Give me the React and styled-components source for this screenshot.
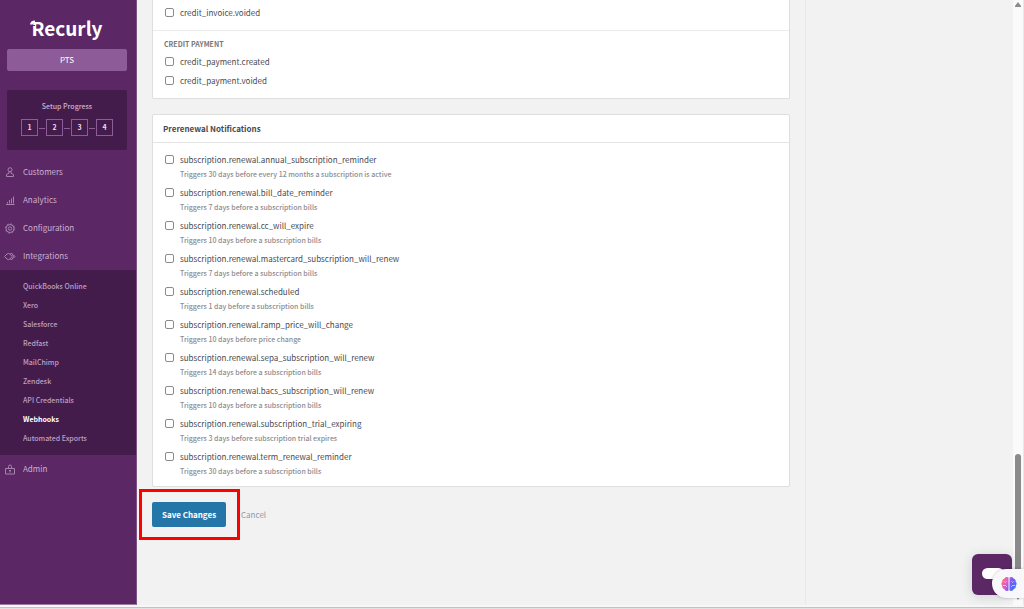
import React from "react";
import styled, { createGlobalStyle } from "styled-components";

const Global = createGlobalStyle`
  * { box-sizing: border-box; }
  body {
    margin: 0;
    background: #f2f2f2;
    color: #4a4a4f;
    font-family: "Noto Sans CJK SC", "Noto Sans", sans-serif;
    font-size: 8px;
    line-height: 12px;
  }
  button, input { font: inherit; }
  a { color: inherit; text-decoration: none; }
  ul { list-style: none; margin: 0; padding: 0; }
`;

const Window = styled.div`
  display: flex;
  flex-direction: column;
  height: 100vh;
  overflow: hidden;
`;

const Page = styled.div`
  flex: 1;
  display: flex;
  min-height: 0;
`;

const WindowEdge = styled.div`
  height: 4px;
  background: #f7f7f7;
  border-bottom: 1px solid #e2e2e2;
  box-shadow: inset 0 -1px #c2c2c2;
`;

const Sidebar = styled.aside`
  width: 137px;
  flex: none;
  background: #5b2765;
  border-right: 1px solid #7d5387;
  border-bottom: 1px solid #9a7aa2;
  color: #cbb0d0;
`;

const SidebarTop = styled.div`
  display: flex;
  flex-direction: column;
  padding: 14px 9px 0 7px;
`;

const Logo = styled.a`
  position: relative;
  align-self: center;
  color: #fff;
  font-size: 19px;
  line-height: 28px;
  font-weight: 700;
`;

const LogoHook = styled.svg`
  position: absolute;
  left: -1px;
  top: 5px;
`;

const SiteButton = styled.button`
  height: 22px;
  margin-top: 7px;
  padding: 0;
  border: 0;
  border-radius: 2px;
  background: #8e5b99;
  color: #fff;
`;

const Setup = styled.section`
  margin-top: 19px;
  height: 60px;
  padding-top: 10px;
  border-radius: 2px;
  background: #441c4b;
  font-size: 7px;
  font-weight: 500;
  text-align: center;
`;

const Steps = styled.ol`
  display: flex;
  justify-content: center;
  gap: 8px;
  margin: 7px 0 0;
  padding: 0;
  list-style: none;
`;

const Step = styled.li`
  position: relative;
  width: 17px;
  height: 17px;
  border: 1px solid #8e5b99;
  line-height: 15px;
  font-weight: 700;
  color: #e8dcea;
  & + &::before {
    content: "";
    position: absolute;
    left: -8px;
    top: 8px;
    width: 6px;
    height: 1px;
    background: #8e5b99;
  }
`;

const Nav = styled.nav`
  padding-top: 8px;
`;

const NavLink = styled.a`
  display: flex;
  align-items: center;
  gap: 7px;
  height: 28px;
  padding-left: 5px;
`;

const NavIcon = styled.svg`
  width: 11px;
  height: 11px;
  fill: none;
  stroke: #a583ad;
  stroke-width: 1;
  flex: none;
`;

const SubNav = styled.ul`
  padding: 7px 0;
  background: #441c4b;
`;

const SubLink = styled.a`
  display: block;
  height: 19px;
  padding-left: 23px;
  font-size: 7px;
  line-height: 19px;
  color: ${(p) => (p.$active ? "#fff" : "#bda0c2")};
  font-weight: ${(p) => (p.$active ? 700 : 500)};
`;

const Main = styled.main`
  flex: 1;
  min-width: 0;
  padding: 0 15px;
`;

const Card = styled.section`
  background: #fff;
  border: 1px solid #dedede;
  border-top-width: ${(p) => (p.$cut ? 0 : 1)}px;
  border-radius: ${(p) => (p.$cut ? "0 0 2px 2px" : "2px")};
  margin-bottom: 15px;
`;

const Group = styled.div`
  padding: ${(p) => (p.$first ? "3px 11px 8px" : "7px 11px 8px")};
  border-top: ${(p) => (p.$first ? 0 : 1)}px solid #ebebeb;
`;

const GroupTitle = styled.h3`
  margin: 0 0 1px;
  color: #77777c;
  font-size: 7px;
  line-height: 13px;
  font-weight: 700;
  text-transform: uppercase;
`;

const CardTitle = styled.h2`
  margin: 0;
  padding: 0 10px;
  border-bottom: 1px solid #e3e3e3;
  font-size: 8px;
  line-height: 27px;
  font-weight: 700;
`;

const Events = styled.ul`
  padding: 7px 11px 6px;
`;

const Event = styled.li`
  height: ${(p) => (p.$tall ? 33 : 19)}px;
`;

const Label = styled.label`
  display: flex;
  align-items: center;
  gap: 6px;
  height: 19px;
`;

const Tick = styled.input`
  appearance: none;
  width: 9px;
  height: 9px;
  margin: 0 0 0 1px;
  border: 1px solid #8b8b8b;
  border-radius: 2px;
  background: #fff;
`;

const Hint = styled.p`
  margin: 0 0 0 16px;
  color: #8c8c91;
  font-size: 7px;
  line-height: 10px;
  font-weight: 500;
`;

const Actions = styled.div`
  display: flex;
  align-items: center;
  gap: 15px;
`;

const SaveWrap = styled.div`
  position: relative;
  &::after {
    content: "";
    position: absolute;
    inset: -13px -14px -13px -13px;
    border: 3px solid #fd0000;
    pointer-events: none;
  }
`;

const Save = styled.button`
  display: block;
  width: 74px;
  height: 25px;
  padding: 0;
  border: 0;
  border-radius: 2px;
  background: #2576a8;
  color: #fff;
  font-weight: 700;
`;

const Cancel = styled.a`
  color: #97979b;
`;

const Rail = styled.aside`
  width: 208px;
  flex: none;
  border-left: 1px solid #e9e9e9;
`;

const ScrollTrack = styled.div`
  display: flex;
  flex-direction: column;
  align-items: center;
  width: 11px;
  padding: 2px 0 5px;
  background: #fafafa;
  border-right: 1px solid #e8e8e8;
`;

const ScrollThumb = styled.div`
  width: 6px;
  height: 130px;
  margin: auto 0 13px;
  border-radius: 3px;
  background: #8a8a8a;
`;

const Chat = styled.button`
  position: fixed;
  right: 12px;
  bottom: 14px;
  width: 40px;
  height: 41px;
  padding: 0;
  border: 0;
  border-radius: 6px;
  background: #5b2765;
  box-shadow: 0 2px 12px rgba(40, 60, 70, 0.18);
`;

const Assistant = styled.button`
  position: fixed;
  right: 0;
  bottom: 11px;
  width: 32px;
  height: 29px;
  padding: 0 0 0 9px;
  border: 0;
  border-radius: 15px 0 0 15px;
  background: #f8f8fa;
  box-shadow: 0 0 3px rgba(0, 0, 0, 0.25);
  display: flex;
  align-items: center;
`;

const icons = {
  Customers: (
    <>
      <circle cx="5" cy="2.700" r="2" />
      <path d="M4 4.700v1.500L1.500 7.500v2h7v-2L6 6.200V4.700" />
    </>
  ),
  Analytics: <path d="M1 9.500h8.500M2.500 8.500V7M4.500 8.500V5M6.500 8.500V3.500M8.500 8.500V1.500" />,
  Configuration: (
    <>
      <circle cx="5" cy="5.500" r="4" />
      <circle cx="5" cy="5.500" r="4.700" strokeWidth="0.8" strokeDasharray="1.850 1.840" />
      <circle cx="5" cy="5.500" r="1.700" />
    </>
  ),
  Integrations: (
    <>
      <path d="M-0.500 5.500 2 3Q3.500 1.800 5 3L7 5.500 5 8Q3.500 9.200 2 8z" />
      <path d="M5.500 2.500Q7 2 8 3.500l2 2-2 2Q7 9 5.500 8.500M7.500 3.500l1 2-1 2" />
    </>
  ),
  Admin: (
    <path d="M0.500 4.500h9v5.500h-9zM3.500 4.500V2.500a1.500 1.500 0 0 1 3 0V4.500M5 6v2.500M4 6.500h2" />
  ),
};

const integrations = [
  "QuickBooks Online", "Xero", "Salesforce", "Redfast", "MailChimp",
  "Zendesk", "API Credentials", "Webhooks", "Automated Exports",
];

const renewals = [
  ["annual_subscription_reminder", "Triggers 30 days before every 12 months a subscription is active"],
  ["bill_date_reminder", "Triggers 7 days before a subscription bills"],
  ["cc_will_expire", "Triggers 10 days before a subscription bills"],
  ["mastercard_subscription_will_renew", "Triggers 7 days before a subscription bills"],
  ["scheduled", "Triggers 1 day before a subscription bills"],
  ["ramp_price_will_change", "Triggers 10 days before price change"],
  ["sepa_subscription_will_renew", "Triggers 14 days before a subscription bills"],
  ["bacs_subscription_will_renew", "Triggers 10 days before a subscription bills"],
  ["subscription_trial_expiring", "Triggers 3 days before subscription trial expires"],
  ["term_renewal_reminder", "Triggers 30 days before a subscription bills"],
];

function NavItem({ name }) {
  return (
    <NavLink href="#">
      <NavIcon viewBox="0 0 11 11" overflow="visible" aria-hidden="true">{icons[name]}</NavIcon>
      {name}
    </NavLink>
  );
}

function EventRow({ name, hint }) {
  return (
    <Event $tall={Boolean(hint)}>
      <Label>
        <Tick type="checkbox" name={name} />
        {name}
      </Label>
      {hint && <Hint>{hint}</Hint>}
    </Event>
  );
}

export default function App() {
  return (
    <Window>
      <Global />
      <Page>
        <Sidebar>
          <SidebarTop>
            <Logo href="#">
              Recurly
              <LogoHook width="8" height="8" viewBox="0 0 8 8" aria-hidden="true">
                <path d="M0 0h5L2 5v1h3v1H0z" fill="#5b2765" />
                <path d="M0 5.500Q0.500 1.500 5 1.500V3.500Q3 3.500 2.500 5.500z" fill="#fff" />
              </LogoHook>
            </Logo>
            <SiteButton type="button">PTS</SiteButton>
            <Setup>
              Setup Progress
              <Steps>
                {[1, 2, 3, 4].map((n) => <Step key={n}>{n}</Step>)}
              </Steps>
            </Setup>
          </SidebarTop>
          <Nav>
            <NavItem name="Customers" />
            <NavItem name="Analytics" />
            <NavItem name="Configuration" />
            <NavItem name="Integrations" />
            <SubNav>
              {integrations.map((name) => (
                <li key={name}>
                  <SubLink href="#" $active={name === "Webhooks"}>{name}</SubLink>
                </li>
              ))}
            </SubNav>
            <NavItem name="Admin" />
          </Nav>
        </Sidebar>
        <Main>
          <Card $cut>
            <Group $first as="ul">
              <EventRow name="credit_invoice.voided" />
            </Group>
            <Group>
              <GroupTitle>Credit Payment</GroupTitle>
              <ul>
                <EventRow name="credit_payment.created" />
                <EventRow name="credit_payment.voided" />
              </ul>
            </Group>
          </Card>
          <Card>
            <CardTitle>Prerenewal Notifications</CardTitle>
            <Events>
              {renewals.map(([name, hint]) => (
                <EventRow key={name} name={`subscription.renewal.${name}`} hint={hint} />
              ))}
            </Events>
          </Card>
          <Actions>
            <SaveWrap>
              <Save type="button">Save Changes</Save>
            </SaveWrap>
            <Cancel href="#">Cancel</Cancel>
          </Actions>
        </Main>
        <Rail />
        <ScrollTrack>
          <svg width="6" height="5" viewBox="0 0 6 5" fill="#8a8a8a"><path d="M3 0 6 4v1H0V4z" /></svg>
          <ScrollThumb />
          <svg width="4" height="3" viewBox="0 0 4 3" fill="#8a8a8a"><path d="M0 0h4L2 3z" /></svg>
        </ScrollTrack>
      </Page>
      <WindowEdge />
      <Chat type="button" aria-label="Open chat">
        <svg width="40" height="41" viewBox="0 0 40 41"><rect x="10" y="14" width="22" height="11" rx="5.500" fill="#fff" /></svg>
      </Chat>
      <Assistant type="button" aria-label="Assistant">
        <svg width="16" height="16" viewBox="0 0 16 16" aria-hidden="true">
          <defs>
            <linearGradient id="brain" x1="0" y1="0.200" x2="1" y2="0.600">
              <stop offset="0" stopColor="#ff7d4a" />
              <stop offset="0.400" stopColor="#d957e0" />
              <stop offset="0.600" stopColor="#7a5cf0" />
              <stop offset="1" stopColor="#3b78f5" />
            </linearGradient>
          </defs>
          <path fill="url(#brain)" d="M7.500 1.500v13C5.500 15.500 3.500 14.500 3.300 13 1.500 12.800 0.800 11 1.300 9.800 0 8.500 0.200 6.500 1.300 5.800 1 4 2 3 3.300 2.800 4 1 6 0.500 7.500 1.500zM8.500 1.500v13c2 1 4 0 4.200-1.500 1.800-.2 2.500-2 2-3.200 1.300-1.300 1.100-3.300 0-4C15 4 14 3 12.700 2.800 12 1 10 .5 8.500 1.500z" />
          <path fill="none" stroke="#fff" strokeWidth="0.600" d="M3.300 5.500C4 6.500 5 6.500 5.500 5.500M2 9.500h2.500L6 11M12.700 5.500c-.7 1-1.700 1-2.200 0M14 9.500h-2.500L10 11" />
        </svg>
      </Assistant>
    </Window>
  );
}
